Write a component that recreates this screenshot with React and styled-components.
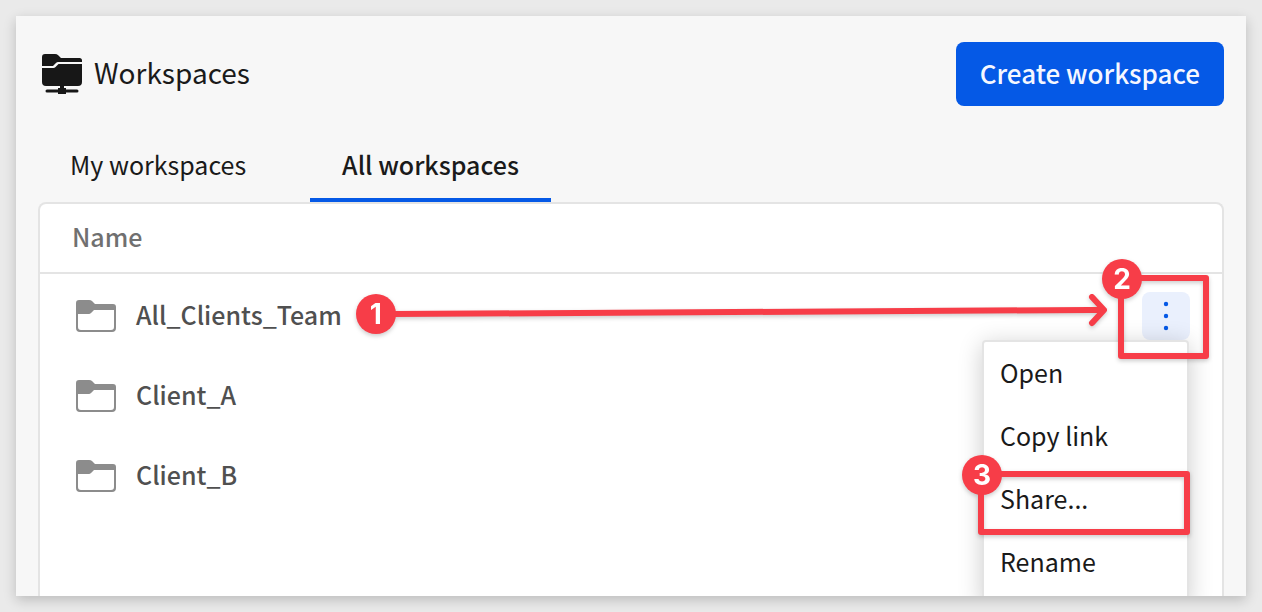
import React from "react";
import styled, { createGlobalStyle, css } from "styled-components";

const blue = "#0559e6";
const red = "#f73d48";
const line = "#e4e4e4";

const GlobalStyle = createGlobalStyle`
  *, *::before, *::after { box-sizing: border-box; }
  body {
    margin: 0;
    background: #eaeaea;
    color: #1a1a1a;
    font-family: "Noto Sans CJK SC", "Noto Sans", sans-serif;
    font-size: 25px;
    line-height: 32px;
  }
  button { font: inherit; color: inherit; border: 0; background: none; cursor: pointer; }
`;

const Page = styled.div`
  height: 100vh;
  padding: 16px;
  display: flex;
`;

const Window = styled.main`
  flex: 1;
  min-width: 0;
  display: flex;
  flex-direction: column;
  padding: 26px 22px 0;
  background: #f7f7f7;
  box-shadow: 0 4px 12px rgba(0, 0, 0, 0.2);
  overflow: hidden;
`;

const Header = styled.header`
  display: flex;
  align-items: center;
  justify-content: space-between;
  padding-left: 4px;
`;

const Title = styled.h1`
  display: flex;
  align-items: center;
  gap: 12px;
  margin: 0;
  font-size: 28px;
  font-weight: 400;
`;

const Label = styled.span`
  padding-bottom: 4px;
`;

const CreateButton = styled.button`
  && {
    height: 64px;
    padding: 0 24px 2px;
    border-radius: 8px;
    background: ${blue};
    color: #f5f7ff;
    font-size: 26px;
    font-weight: 500;
  }
`;

const Tabs = styled.nav`
  display: flex;
  gap: 32px;
  margin-top: 24px;
`;

const Tab = styled.button`
  && {
    height: 72px;
    padding: 0 32px;
    border-bottom: 4px solid ${(p) => (p.$active ? blue : "transparent")};
    font-weight: ${(p) => (p.$active ? 500 : 400)};
  }
`;

const Panel = styled.section`
  flex: 1;
  border: 2px solid ${line};
  border-bottom: 0;
  border-radius: 8px 8px 0 0;
  background: #fff;
`;

const Table = styled.table`
  width: 100%;
  border-spacing: 0;
`;

const HeadCell = styled.th`
  height: 70px;
  padding: 0 32px 4px;
  border-bottom: 2px solid ${line};
  color: #707070;
  font-weight: 500;
  text-align: left;
`;

const NameCell = styled.td`
  height: 80px;
  padding: 4px 0 0 36px;
`;

const ActionCell = styled.td`
  width: 114px;
  padding: 4px 32px 0 34px;
`;

const Name = styled.div`
  display: flex;
  align-items: center;
  gap: 20px;
  color: #505050;
  font-weight: 500;
`;

const Actions = styled.div`
  position: relative;
  width: 48px;
  height: 48px;
`;

const MoreButton = styled.button`
  && {
    display: block;
    width: 48px;
    height: 48px;
    padding: 0;
    border-radius: 8px;
    background: #eaf0fd;
  }
`;

const Menu = styled.ul`
  position: absolute;
  top: 48px;
  right: 1px;
  width: 207px;
  margin: 0;
  padding: 1px 0 8px;
  list-style: none;
  border: 2px solid ${line};
  border-radius: 4px;
  background: #fff;
  background-clip: padding-box;
  box-shadow: 0 4px 24px rgba(0, 0, 0, 0.2);
`;

const MenuItem = styled.li`
  position: relative;
  height: 63px;
`;

const MenuButton = styled.button`
  && {
    width: 100%;
    height: 100%;
    padding: 0 16px 5px;
    text-align: left;
  }
`;

const annotationShadow = css`
  filter: drop-shadow(0 2px 2px rgba(0, 0, 0, 0.2));
`;

const Badge = styled.span`
  flex: none;
  display: flex;
  align-items: center;
  justify-content: center;
  width: 40px;
  height: 40px;
  border-radius: 50%;
  background: ${red};
  color: #fff;
  font: 700 28px/40px Inter, sans-serif;
`;

const Outline = styled.div`
  position: absolute;
  inset: ${(p) => p.$inset};
  border: 6px solid ${red};
  border-radius: 3px;
  pointer-events: none;
  ${annotationShadow}

  ${Badge} {
    position: absolute;
    top: -22px;
    left: -22px;
  }
`;

const Pointer = styled.div`
  flex: 1;
  display: flex;
  align-items: center;
  margin: 0 0 4px -6px;
  ${annotationShadow}
`;

const Shaft = styled.svg`
  flex: 1;
  min-width: 0;
  height: 40px;
  margin: 0 -4px;
  overflow: visible;
`;

const ArrowHead = styled.svg`
  flex: none;
  margin-bottom: 8px;
`;

const WorkspacesIcon = () => (
  <svg width="40" height="40" viewBox="0 0 40 40" fill="#171717" aria-hidden="true">
    <path d="M0 12V3a3 3 0 0 1 3-3h10q2 0 3.200 1.200L19 4h18.500A2.500 2.500 0 0 1 40 6.500V8H16q-1 0-1.800.8L11 12Z" />
    <path d="M0 14h11.500q1 0 1.800-.8L16.500 10H40v18a4 4 0 0 1-4 4H22v2h2v1.500h11a1.500 1.500 0 0 1 0 3H24V40h-8v-1.500H5a1.500 1.500 0 0 1 0-3h11V34h2v-2H4a4 4 0 0 1-4-4Z" />
  </svg>
);

const FolderIcon = () => (
  <svg width="40" height="32" viewBox="0 0 40 32" fill="#8c8c8c" aria-hidden="true">
    <path
      fillRule="evenodd"
      d="M0 3a3 3 0 0 1 3-3h10q2 0 3 1l3 3h18a3 3 0 0 1 3 3v21a4 4 0 0 1-4 4H4a4 4 0 0 1-4-4ZM2 14v13a3 3 0 0 0 3 3h30a3 3 0 0 0 3-3V10H18l-3 3q-1 1-2 1Z"
    />
  </svg>
);

const MoreIcon = () => (
  <svg width="48" height="48" viewBox="0 0 48 48" fill={blue} aria-hidden="true">
    <circle cx="24" cy="12" r="2.200" />
    <circle cx="24" cy="24" r="2.200" />
    <circle cx="24" cy="36" r="2.200" />
  </svg>
);

const Arrow = () => (
  <Pointer>
    <Badge>1</Badge>
    <Shaft aria-hidden="true">
      <line x1="0" y1="20" x2="100%" y2="16" stroke={red} strokeWidth="6" />
    </Shaft>
    <ArrowHead width="22" height="34" viewBox="0 0 22 34" fill="none" stroke={red} strokeWidth="6" strokeLinecap="round" strokeLinejoin="round" aria-hidden="true">
      <path d="M2 17h15M6 4l12 13L6 30" />
    </ArrowHead>
  </Pointer>
);

const workspaces = ["All_Clients_Team", "Client_A", "Client_B"];
const menuItems = ["Open", "Copy link", "Share...", "Rename"];

export default function App() {
  return (
    <>
      <GlobalStyle />
      <Page>
        <Window>
          <Header>
            <Title>
              <WorkspacesIcon />
              <Label>Workspaces</Label>
            </Title>
            <CreateButton>Create workspace</CreateButton>
          </Header>
          <Tabs>
            <Tab>My workspaces</Tab>
            <Tab $active aria-current="page">All workspaces</Tab>
          </Tabs>
          <Panel>
            <Table>
              <thead>
                <tr>
                  <HeadCell colSpan={2}>Name</HeadCell>
                </tr>
              </thead>
              <tbody>
                {workspaces.map((name, i) => (
                  <tr key={name}>
                    <NameCell>
                      <Name>
                        <FolderIcon />
                        <Label>{name}</Label>
                        {i === 0 && <Arrow />}
                      </Name>
                    </NameCell>
                    <ActionCell>
                      {i === 0 && (
                        <Actions>
                          <MoreButton aria-label="More actions">
                            <MoreIcon />
                          </MoreButton>
                          <Menu>
                            {menuItems.map((item) => (
                              <MenuItem key={item}>
                                <MenuButton>{item}</MenuButton>
                                {item === "Share..." && (
                                  <Outline $inset="2px -3px -3px -6px">
                                    <Badge>3</Badge>
                                  </Outline>
                                )}
                              </MenuItem>
                            ))}
                          </Menu>
                          <Outline $inset="-17px -19px -19px -24px">
                            <Badge>2</Badge>
                          </Outline>
                        </Actions>
                      )}
                    </ActionCell>
                  </tr>
                ))}
              </tbody>
            </Table>
          </Panel>
        </Window>
      </Page>
    </>
  );
}
